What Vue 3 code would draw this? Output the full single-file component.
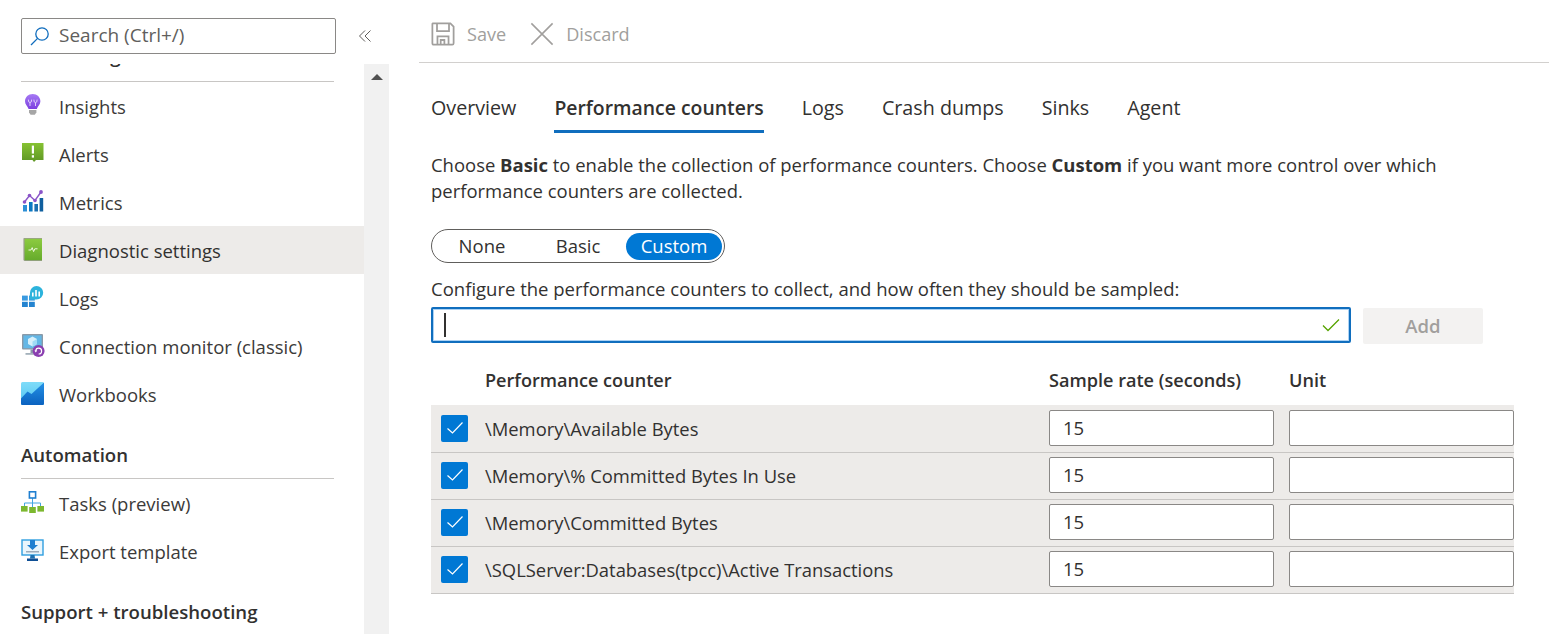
<script setup>
import { ref } from "vue";

const mode = ref("Custom");
const modes = ["None", "Basic", "Custom"];
const tabs = ["Overview", "Performance counters", "Logs", "Crash dumps", "Sinks", "Agent"];
const counters = ref([
  { name: "\\Memory\\Available Bytes", rate: "15", unit: "" },
  { name: "\\Memory\\% Committed Bytes In Use", rate: "15", unit: "" },
  { name: "\\Memory\\Committed Bytes", rate: "15", unit: "" },
  { name: "\\SQLServer:Databases(tpcc)\\Active Transactions", rate: "15", unit: "" },
]);
</script>

<template>
  <div class="page">
    <aside class="sidebar">
      <div class="search-row">
        <div class="search">
          <svg class="search-icon" width="20" height="20" viewBox="0 0 20 20" fill="none" stroke="#0f6cbd" stroke-width="1.3">
            <circle cx="12" cy="8" r="6.2" />
            <path d="M7.6 12.4 L1 19" />
          </svg>
          <input type="text" placeholder="Search (Ctrl+/)" />
        </div>
        <svg class="collapse" width="14" height="14" viewBox="0 0 14 14" fill="none" stroke="#605e5c" stroke-width="1">
          <path d="M7 1.5 L1.5 7 L7 12.5 M12.5 1.5 L7 7 L12.5 12.5" />
        </svg>
      </div>
      <div class="side-body">
        <nav class="menu">
          <h3 class="menu-title clipped">Monitoring</h3>
          <a class="item">
            <svg width="24" height="24" viewBox="0 0 24 24">
              <defs>
                <linearGradient id="bulb" x1="0" y1="0" x2="0" y2="1"><stop offset="0" stop-color="#a67af4" /><stop offset="1" stop-color="#7d40e0" /></linearGradient>
              </defs>
              <path d="M11.7 0 C7.2 0 4 3.2 4 7.3 C4 10.6 6.6 12.4 7.6 15 L15.8 15 C16.8 12.4 19.4 10.6 19.4 7.3 C19.4 3.2 16.2 0 11.7 0 Z" fill="url(#bulb)" />
              <path d="M8 16 H15.4 V18.6 L13.8 20.8 H9.6 L8 18.6 Z" fill="#a6a6a6" />
              <path d="M9 8.6 V12 M14.5 8.6 V12 M7.4 5.6 Q7.2 8.6 9 8.6 Q10.8 8.6 10.6 5.6 M12.9 5.6 Q12.7 8.6 14.5 8.6 Q16.3 8.6 16.1 5.6" fill="none" stroke="#e6dcfa" stroke-width="0.9" />
            </svg>
            <span>Insights</span>
          </a>
          <a class="item">
            <svg width="24" height="24" viewBox="0 0 24 24">
              <defs>
                <linearGradient id="alert" x1="0" y1="0" x2="0" y2="1"><stop offset="0" stop-color="#86c232" /><stop offset="1" stop-color="#5e9624" /></linearGradient>
              </defs>
              <path d="M1 1 H22.5 V18 H15 L13 20 L11.5 18 H1 Z" fill="url(#alert)" />
              <rect x="10.8" y="3.6" width="2.2" height="8" fill="#fff" />
              <rect x="10.8" y="13.2" width="2.2" height="2.4" fill="#fff" />
            </svg>
            <span>Alerts</span>
          </a>
          <a class="item">
            <svg width="24" height="24" viewBox="0 0 24 24">
              <rect x="2" y="15" width="4" height="6.5" fill="#2c8fd6" />
              <rect x="8" y="12" width="3.6" height="9.5" fill="#0a78c2" />
              <rect x="13.4" y="14" width="3.6" height="7.5" fill="#1b6fb0" />
              <rect x="18.6" y="8" width="3.6" height="13.5" fill="#0f5f9e" />
              <path d="M3.5 12 L8.5 5.5 L14 10.5 L20 2" fill="none" stroke="#8a54c8" stroke-width="1.4" />
              <circle cx="3.5" cy="12" r="1.8" fill="#8a54c8" />
              <circle cx="8.5" cy="5.5" r="1.8" fill="#8a54c8" />
              <circle cx="14" cy="10.5" r="1.8" fill="#8a54c8" />
              <circle cx="20" cy="2" r="1.9" fill="#8a54c8" />
            </svg>
            <span>Metrics</span>
          </a>
          <a class="item selected">
            <svg width="24" height="24" viewBox="0 0 24 24">
              <defs>
                <linearGradient id="book" x1="0" y1="0" x2="0" y2="1"><stop offset="0" stop-color="#8ccb40" /><stop offset="1" stop-color="#66ab2c" /></linearGradient>
              </defs>
              <path d="M3 0 H21 V23 H3.6 Q2.4 23 2.4 21.6 V1 Q2.4 0 3 0 Z" fill="#9b9f8e" />
              <rect x="3.6" y="0.8" width="17.4" height="21.4" fill="url(#book)" />
              <path d="M7.5 12 L10 12 L11.2 9.6 L12.6 13.6 L13.8 10.8 L16.5 10.8" fill="none" stroke="#eef8df" stroke-width="1" />
            </svg>
            <span>Diagnostic settings</span>
          </a>
          <a class="item">
            <svg width="24" height="24" viewBox="0 0 24 24">
              <rect x="1" y="9.6" width="5.8" height="5" fill="#3a9ae0" />
              <rect x="8" y="9.6" width="5.8" height="5" fill="#3a9ae0" />
              <rect x="1" y="15.8" width="5.8" height="5.2" fill="#2484d0" />
              <rect x="8" y="15.8" width="5.8" height="5.2" fill="#2484d0" />
              <path d="M15.5 0 A6.6 6.6 0 0 1 15.5 13.4 L8.6 13.4 L9 6.6 A6.6 6.6 0 0 1 15.5 0 Z" fill="#2cb3dc" />
              <rect x="11" y="6.5" width="1.6" height="4" fill="#fff" />
              <rect x="14.2" y="4" width="1.6" height="6.5" fill="#fff" />
              <rect x="17.4" y="5.5" width="1.6" height="5" fill="#fff" />
            </svg>
            <span>Logs</span>
          </a>
          <a class="item">
            <svg width="24" height="24" viewBox="0 0 24 24">
              <rect x="1" y="0" width="21" height="15.5" rx="1" fill="#8a9aa8" />
              <rect x="2.4" y="1.4" width="18.2" height="12.8" fill="#63b7e6" />
              <path d="M11.5 2.6 L16 5 V10 L11.5 12.6 L7 10 V5 Z" fill="#d7f0fb" />
              <path d="M11.5 7.4 L16 5 V10 L11.5 12.6 Z" fill="#9fdcf6" />
              <rect x="9.5" y="15.5" width="4" height="3.5" fill="#8a9aa8" />
              <rect x="4.5" y="19" width="13" height="1.8" fill="#a4b1bb" />
              <circle cx="17.6" cy="17" r="6" fill="#8a3fb0" />
              <path d="M14.8 17 A2.9 2.9 0 1 1 17.6 20" fill="none" stroke="#fff" stroke-width="1.2" />
              <path d="M13.4 16.6 H16.2 L14.8 18.4 Z" fill="#fff" />
            </svg>
            <span>Connection monitor (classic)</span>
          </a>
          <a class="item">
            <svg width="24" height="24" viewBox="0 0 24 24">
              <defs>
                <linearGradient id="wb-top" x1="0" y1="0" x2="0" y2="1"><stop offset="0" stop-color="#7fdcf9" /><stop offset="1" stop-color="#4fc3f0" /></linearGradient>
                <linearGradient id="wb-bot" x1="0" y1="0" x2="0" y2="1"><stop offset="0" stop-color="#2491e6" /><stop offset="1" stop-color="#0b62bf" /></linearGradient>
              </defs>
              <rect x="0" y="0" width="23" height="23" rx="1.5" fill="url(#wb-top)" />
              <path d="M0 16.5 L6.5 9.5 L10.5 12 L23 0.5 V21.5 Q23 23 21.5 23 H1.5 Q0 23 0 21.5 Z" fill="url(#wb-bot)" />
            </svg>
            <span>Workbooks</span>
          </a>

          <h3 class="menu-title">Automation</h3>
          <a class="item">
            <svg width="24" height="24" viewBox="0 0 24 24">
              <path d="M11.5 6.5 V14 M3.5 16 V12 H19.5 V16 M11.5 12 V16" fill="none" stroke="#44a6e0" stroke-width="1" />
              <rect x="8.4" y="0.8" width="6.2" height="6.2" fill="#fff" stroke="#1f7fd0" stroke-width="1.6" />
              <rect x="0" y="15" width="6.6" height="5.6" fill="#7cb82f" />
              <rect x="8.2" y="16" width="6.6" height="6" fill="#7cb82f" />
              <rect x="16.4" y="15" width="6.6" height="5.6" fill="#7cb82f" />
            </svg>
            <span>Tasks (preview)</span>
          </a>
          <a class="item">
            <svg width="24" height="24" viewBox="0 0 24 24">
              <rect x="1" y="1" width="21" height="15" fill="#e9f5fc" stroke="#2f9fe0" stroke-width="1.4" />
              <path d="M9 1 H14 V6 H17 L11.5 11 L6 6 H9 Z" fill="#1f7fd0" />
              <path d="M5 12.8 H18" stroke="#8a99a8" stroke-width="1.2" />
              <path d="M9.5 16 H13.5 L14 19.5 H9 Z" fill="#1b6fb0" />
              <rect x="6" y="19.5" width="11" height="2.5" fill="#0f4f95" />
            </svg>
            <span>Export template</span>
          </a>

          <h3 class="menu-title support">Support + troubleshooting</h3>
        </nav>
        <div class="scrollbar">
          <span class="arrow"></span>
        </div>
      </div>
    </aside>

    <main class="main">
      <div class="toolbar">
        <button class="tool" disabled>
          <svg width="24" height="24" viewBox="0 0 26 26" fill="none" stroke="#a19f9d" stroke-width="1.9">
            <path d="M2 1.5 H21 L24.5 5 V23 Q24.5 24.5 23 24.5 H3 Q1.5 24.5 1.5 23 V2 Z" />
            <path d="M6.5 2 V10 H19.5 V2" />
            <path d="M7 24 V15.5 H19 V24 M10.5 24 V19.5 H14.5 V24" />
          </svg>
          <span>Save</span>
        </button>
        <button class="tool" disabled>
          <svg width="24" height="24" viewBox="0 0 26 26" fill="none" stroke="#a19f9d" stroke-width="1.7">
            <path d="M1.5 1.5 L24.5 24.5 M24.5 1.5 L1.5 24.5" />
          </svg>
          <span>Discard</span>
        </button>
      </div>

      <div class="content">
        <div class="tabs">
          <a v-for="tab in tabs" :key="tab" class="tab" :class="{ active: tab === 'Performance counters' }">{{ tab }}</a>
        </div>

        <p class="intro">
          Choose <b>Basic</b> to enable the collection of performance counters. Choose <b>Custom</b> if you want more control over which performance counters are collected.
        </p>

        <div class="toggle">
          <button v-for="m in modes" :key="m" :class="{ on: mode === m }" @click="mode = m">{{ m }}</button>
        </div>

        <label class="config-label">Configure the performance counters to collect, and how often they should be sampled:</label>
        <div class="add-row">
          <div class="counter-box">
            <span class="caret"></span>
            <input type="text" />
            <svg width="18" height="14" viewBox="0 0 18 14" fill="none" stroke="#57a300" stroke-width="1.3">
              <path d="M1 7.5 L6 12.5 L17 1.5" />
            </svg>
          </div>
          <button class="add" disabled>Add</button>
        </div>

        <div class="grid head">
          <span></span>
          <span>Performance counter</span>
          <span>Sample rate (seconds)</span>
          <span>Unit</span>
        </div>
        <div class="rows">
          <div v-for="c in counters" :key="c.name" class="grid row">
            <span class="check">
              <svg width="18" height="14" viewBox="0 0 18 14" fill="none" stroke="#fff" stroke-width="1.2">
                <path d="M1.5 7.5 L6.5 12 L16.5 1.5" />
              </svg>
            </span>
            <span class="name">{{ c.name }}</span>
            <input class="cell" type="text" v-model="c.rate" />
            <input class="cell" type="text" v-model="c.unit" />
          </div>
        </div>
      </div>
    </main>
  </div>
</template>

<style>
html,
body {
  margin: 0;
  background: #fff;
  overflow: hidden;
}
</style>

<style scoped>
.page {
  display: flex;
  height: 634px;
  overflow: hidden;
  font-family: "Open Sans", "Noto Sans", sans-serif;
  font-size: 18.5px;
  color: #323130;
}

.sidebar {
  width: 389px;
  flex-shrink: 0;
  display: flex;
  flex-direction: column;
}

.search-row {
  height: 64px;
  flex-shrink: 0;
  display: flex;
  align-items: flex-start;
  padding: 18px 0 0 21px;
  box-sizing: border-box;
}

.search {
  width: 315px;
  height: 36px;
  box-sizing: border-box;
  border: 1px solid #8a8886;
  border-radius: 2px;
  display: flex;
  align-items: center;
  padding-left: 8px;
  gap: 9px;
}

.search input {
  border: none;
  outline: none;
  flex: 1;
  min-width: 0;
  font: inherit;
  font-size: 19px;
  padding: 0 0 3px;
  background: transparent;
  color: #323130;
}

.search input::placeholder {
  color: #605e5c;
  opacity: 1;
}

.collapse {
  margin: 11px 0 0 22px;
}

.side-body {
  flex: 1;
  min-height: 0;
  display: flex;
}

.menu {
  width: 364px;
  overflow: hidden;
}

.menu-title {
  margin: 24px 30px 0 21px;
  font-size: 18.6px;
  font-weight: 600;
  line-height: 26px;
  padding-bottom: 10px;
  border-bottom: 1px solid #c8c6c4;
  color: #323130;
}

.menu-title.clipped {
  margin-top: -21px;
  padding-bottom: 12px;
}

.menu-title.support {
  border-bottom: none;
  margin-top: 24px;
}

.item {
  height: 48px;
  display: flex;
  align-items: center;
  gap: 14px;
  padding-left: 21px;
  color: #3b3a39;
}

.item svg {
  flex-shrink: 0;
}

.item.selected {
  background: #edebe9;
  color: #323130;
}

.scrollbar {
  width: 25px;
  background: #f1f1f1;
  display: flex;
  justify-content: center;
  padding-top: 10px;
  box-sizing: border-box;
}

.arrow {
  width: 0;
  height: 0;
  border-left: 6px solid transparent;
  border-right: 6px solid transparent;
  border-bottom: 6px solid #505050;
}

.main {
  flex: 1;
  min-width: 0;
}

.toolbar {
  height: 63px;
  box-sizing: border-box;
  margin-left: 30px;
  padding: 6px 0 0 12px;
  border-bottom: 1px solid #d2d0ce;
  display: flex;
  align-items: center;
  gap: 24px;
}

.tool {
  display: flex;
  align-items: center;
  gap: 12px;
  border: none;
  background: none;
  padding: 0;
  font: inherit;
  font-size: 18.1px;
  color: #a19f9d;
}

.content {
  padding: 0 35px 0 42px;
}

.tabs {
  display: flex;
  gap: 38px;
  margin-top: 31px;
}

.tab {
  font-size: 19.7px;
  line-height: 28px;
  padding-bottom: 8px;
  border-bottom: 3px solid transparent;
  color: #323130;
}

.tab.active {
  font-size: 19.4px;
  font-weight: 600;
  border-bottom-color: #106ebe;
}

.intro {
  margin: 19px 0 0;
  font-size: 18.47px;
  line-height: 26px;
  max-width: 1040px;
}

.intro b {
  font-weight: 700;
}

.toggle {
  display: flex;
  width: max-content;
  margin-top: 25px;
  padding: 3px 2px 2px;
  border: 1px solid #605e5c;
  border-radius: 17px;
}

.toggle button {
  width: 96px;
  height: 27px;
  border: none;
  border-radius: 14px;
  background: none;
  padding: 0 0 2px;
  font: inherit;
  color: #323130;
}

.toggle button.on {
  background: #0078d4;
  color: #fff;
}

.config-label {
  display: block;
  margin-top: 13px;
  line-height: 26px;
}

.add-row {
  display: flex;
  align-items: flex-start;
  gap: 12px;
  margin-top: 5px;
}

.counter-box {
  width: 920px;
  height: 36px;
  box-sizing: border-box;
  border: 2px solid #106ebe;
  border-radius: 2px;
  box-shadow: inset 0 0 0 1px rgba(70, 155, 230, 0.45);
  display: flex;
  align-items: center;
  padding: 0 9px 0 11px;
}

.caret {
  width: 2px;
  height: 24px;
  background: #323130;
}

.counter-box input {
  flex: 1;
  min-width: 0;
  border: none;
  outline: none;
  background: transparent;
  font: inherit;
}

.add {
  width: 120px;
  height: 36px;
  margin-top: 1px;
  border: none;
  border-radius: 2px;
  background: #f3f2f1;
  color: #a19f9d;
  font: inherit;
  font-weight: 600;
  padding: 0 0 2px;
}

.grid {
  display: grid;
  grid-template-columns: 54px 1fr 240px 225px;
  align-items: center;
}

.head {
  margin-top: 23px;
  margin-bottom: 12px;
  font-size: 18.1px;
  line-height: 26px;
  font-weight: 600;
}

.rows {
  padding-top: 1px;
  background: #edebe9;
}

.row {
  height: 47px;
  box-sizing: border-box;
  padding-bottom: 2px;
  border-bottom: 1px solid #c8c6c4;
}

.name {
  font-size: 18.4px;
}

.check {
  width: 27px;
  height: 27px;
  margin-left: 10px;
  background: #0078d4;
  border-radius: 2px;
  display: flex;
  align-items: center;
  justify-content: center;
}

.cell {
  width: 225px;
  height: 36px;
  box-sizing: border-box;
  border: 1px solid #8a8886;
  border-radius: 2px;
  background: #fff;
  padding: 0 13px 2px;
  font: inherit;
  color: #323130;
  outline: none;
}
</style>
